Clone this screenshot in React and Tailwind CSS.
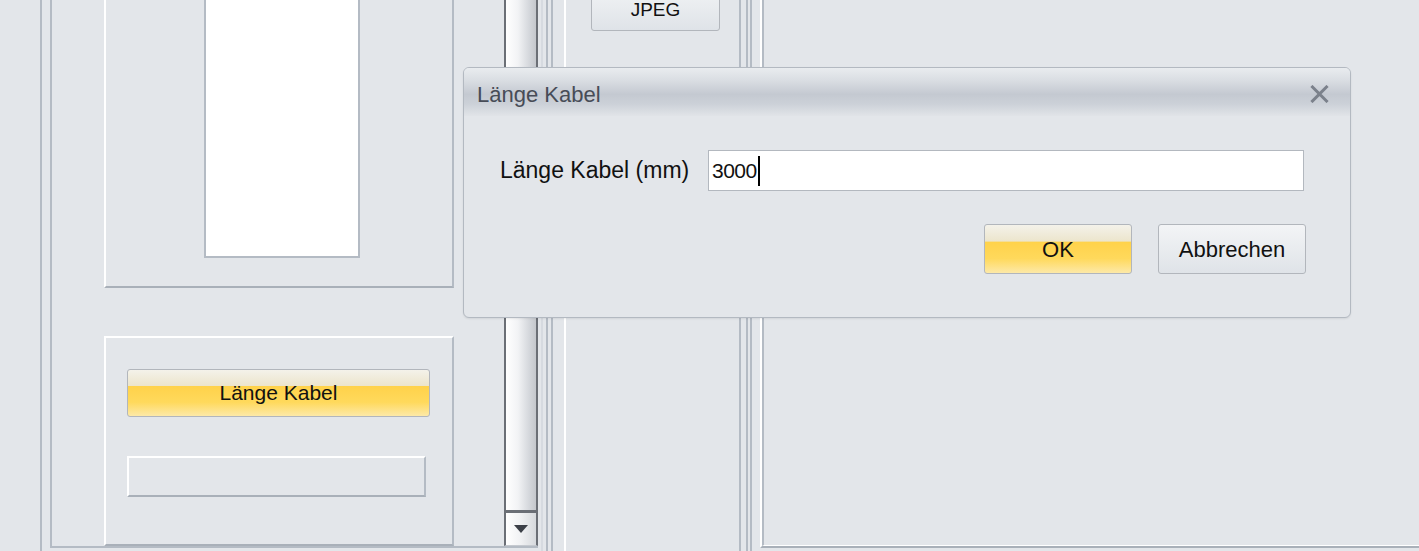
import React from 'react';

const font = { fontFamily: '"Liberation Sans", Arial, sans-serif' };

const YellowButton = ({ children, className = '' }) => (
  <div
    className={`flex items-center justify-center rounded-[3px] border border-[#b2b6bc] bg-[linear-gradient(to_bottom,#f4f2ea_0%,#ece5cc_34%,#ffd24a_35%,#ffd95c_70%,#fde9a8_100%)] text-[#111] ${className}`}
  >
    {children}
  </div>
);

const GrayButton = ({ children, className = '' }) => (
  <div
    className={`flex items-center justify-center rounded-[3px] border border-[#b2b6bc] bg-[linear-gradient(to_bottom,#f3f4f6_0%,#e9ecef_50%,#dfe3e8_100%)] text-[#111] ${className}`}
  >
    {children}
  </div>
);

const App = () => {
  return (
    <div className="relative flex h-[551px] w-[1419px] overflow-hidden bg-[#e3e6ea]" style={font}>
      {/* left frame */}
      <div className="ml-[40px] flex h-[551px] border-l-2 border-[#b4bbc4] pl-[8px]">
        <div className="flex h-[548px] w-[488px] border-b-2 border-l-2 border-[#b4bbc4]">
          {/* panels column */}
          <div className="ml-[52px] flex w-[350px] flex-col">
            <div className="flex h-[288px] border-b-2 border-l-2 border-r-2 border-b-[#a9b0b9] border-l-white border-r-[#b4bbc4]">
              <div className="ml-[98px] h-[258px] w-[156px] border-b-2 border-l-2 border-r-2 border-[#b4bbc4] bg-white" />
            </div>
            <div className="mt-[48px] flex h-[210px] flex-col border-2 border-b-[#a9b0b9] border-l-white border-r-[#b4bbc4] border-t-white px-[21px] pt-[31px]">
              <YellowButton className="h-[48px] w-[303px] text-[21px]">Länge Kabel</YellowButton>
              <div className="mt-[39px] h-[41px] w-[299px] border-2 border-b-[#a9b0b9] border-l-white border-r-[#b4bbc4] border-t-white" />
            </div>
          </div>
          {/* scrollbar */}
          <div className="ml-[50px] flex h-[546px] w-[34px] flex-col border-b border-l-2 border-r-2 border-[#6b6f76] border-b-[#c5c9cf]">
            <div className="flex-1 bg-[linear-gradient(to_right,#ffffff_0%,#f2f3f5_40%,#d2d5da_80%,#c4c7cc_100%)]" />
            <div className="flex h-[35px] items-center justify-center border-t-[3px] border-[#6b6f76] bg-[linear-gradient(to_right,#ffffff_0%,#f0f1f3_50%,#d6d9dd_100%)]">
              <svg width="14" height="9" viewBox="0 0 14 9">
                <path d="M0 0 H14 L7 8 Z" fill="#3c4048" />
              </svg>
            </div>
          </div>
        </div>
      </div>
      {/* separator lines */}
      <div className="ml-[3px] h-[551px] w-[2px] bg-[#d6dae0]" />
      <div className="ml-[3px] h-[551px] w-[2px] bg-[#b4bbc4]" />
      <div className="ml-[3px] h-[551px] w-[2px] bg-[#b4bbc4]" />
      {/* middle column */}
      <div className="ml-[11px] flex h-[551px] w-[177px] border-l-2 border-r-2 border-l-white border-r-[#b4bbc4]">
        <GrayButton className="-mt-[17px] ml-[25px] h-[48px] w-[129px] pt-[6px] text-[19px]">JPEG</GrayButton>
      </div>
      <div className="ml-[5px] h-[551px] w-[2px] bg-[#b4bbc4]" />
      <div className="ml-[2px] h-[551px] w-[2px] bg-[#b4bbc4]" />
      {/* right panel */}
      <div className="ml-[8px] h-[548px] flex-1 border-b-2 border-l-2 border-b-[#a9b0b9] border-l-white">
        <div className="h-full border-b border-l-2 border-b-white border-l-[#b4bbc4]" />
      </div>

      {/* dialog */}
      <div className="absolute left-[463px] top-[67px] flex h-[251px] w-[888px] flex-col overflow-hidden rounded-[6px] border border-[#b3b9c1] bg-[#e3e6ea] shadow-[0_1px_2px_rgba(0,0,0,0.08)]">
        <div className="flex h-[48px] items-center justify-between bg-[linear-gradient(to_bottom,#e9ecef_0%,#dadee3_25%,#c4c9d1_55%,#ccd1d8_75%,#e1e4e8_100%)] pl-[13px] pr-[21px]">
          <span className="mt-[4px] text-[22px] text-[#474c57]">Länge Kabel</span>
          <svg width="19" height="18" viewBox="0 0 19 18" className="mt-[4px]">
            <path d="M2.5 2 L16.5 16 M16.5 2 L2.5 16" stroke="#7b818b" strokeWidth="3" strokeLinecap="square" />
          </svg>
        </div>
        <div className="flex items-center pl-[36px] pt-[34px]">
          <span className="w-[208px] text-[23px] text-[#111]">Länge Kabel (mm)</span>
          <div className="flex h-[41px] w-[596px] items-center border border-[#b3b8bf] bg-white pl-[3px] text-[21px] text-[#111]">
            <span className="tracking-[-0.5px]">3000</span>
            <span className="ml-[1px] h-[30px] w-[2px] bg-black" />
          </div>
        </div>
        <div className="flex justify-end gap-[26px] pr-[44px] pt-[33px]">
          <YellowButton className="h-[50px] w-[148px] text-[22px]">OK</YellowButton>
          <GrayButton className="h-[50px] w-[148px] text-[22px]">Abbrechen</GrayButton>
        </div>
      </div>
    </div>
  );
};

export default App;
